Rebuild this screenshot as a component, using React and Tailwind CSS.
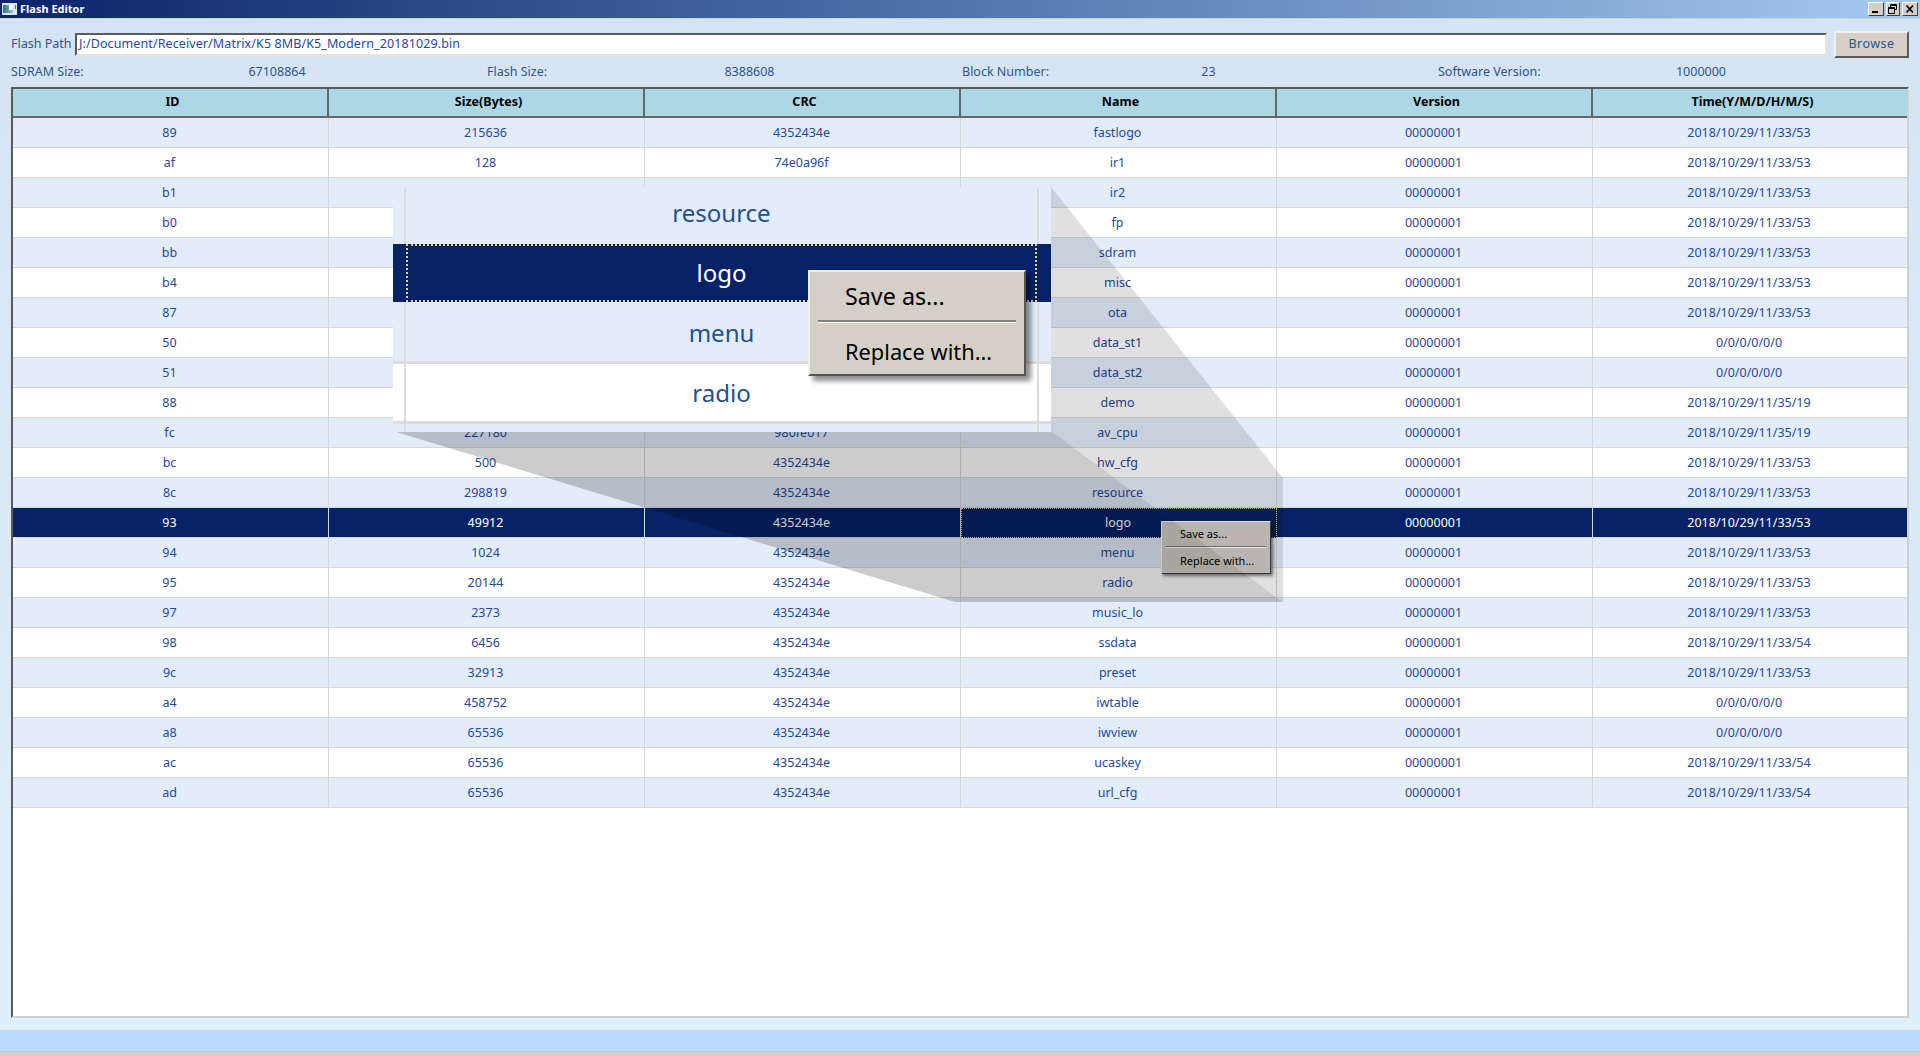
import React from 'react';

const T53 = '2018/10/29/11/33/53';
const T54 = '2018/10/29/11/33/54';
const T19 = '2018/10/29/11/35/19';
const T0 = '0/0/0/0/0/0';
const CRC = '4352434e';

const rows = [
    ['89', '215636', CRC, 'fastlogo', T53],
    ['af', '128', '74e0a96f', 'ir1', T53],
    ['b1', '', '', 'ir2', T53],
    ['b0', '', '', 'fp', T53],
    ['bb', '', '', 'sdram', T53],
    ['b4', '', '', 'misc', T53],
    ['87', '', '', 'ota', T53],
    ['50', '', '', 'data_st1', T0],
    ['51', '', '', 'data_st2', T0],
    ['88', '', '', 'demo', T19],
    ['fc', '227180', '980fe017', 'av_cpu', T19],
    ['bc', '500', CRC, 'hw_cfg', T53],
    ['8c', '298819', CRC, 'resource', T53],
    ['93', '49912', CRC, 'logo', T53],
    ['94', '1024', CRC, 'menu', T53],
    ['95', '20144', CRC, 'radio', T53],
    ['97', '2373', CRC, 'music_lo', T53],
    ['98', '6456', CRC, 'ssdata', T54],
    ['9c', '32913', CRC, 'preset', T53],
    ['a4', '458752', CRC, 'iwtable', T0],
    ['a8', '65536', CRC, 'iwview', T0],
    ['ac', '65536', CRC, 'ucaskey', T54],
    ['ad', '65536', CRC, 'url_cfg', T54],
];

const headers = ['ID', 'Size(Bytes)', 'CRC', 'Name', 'Version', 'Time(Y/M/D/H/M/S)'];

const info = [
    { label: 'SDRAM Size:', value: '67108864', cls: 'w-[476px]', valueCls: 'w-[312px]' },
    { label: 'Flash Size:', value: '8388608', cls: 'w-[475px]', valueCls: 'w-[305px]' },
    { label: 'Block Number:', value: '23', cls: 'w-[476px]', valueCls: 'w-[273px]' },
    { label: 'Software Version:', value: '1000000', cls: 'w-[470px]', valueCls: 'w-[306px]' },
];

const cols = 'grid grid-cols-[316px_316px_316px_316px_316px_1fr]';

const WinButton = ({ w, children }) => (
    <div className={`${w} h-[14px] bg-[#d4d0c8] border border-t-white border-l-white border-r-[#404040] border-b-[#404040] flex items-center justify-center`}>
        <svg width="12" height="10" viewBox="0 0 12 10">{children}</svg>
    </div>
);

const TitleBar = () => (
    <div className="h-[18px] flex items-center bg-gradient-to-r from-[#0a246a] to-[#a6caf0] pl-[2px] pr-[2px]">
        <svg width="15" height="12" viewBox="0 0 15 12" className="shrink-0">
            <defs>
                <linearGradient id="ico" x1="0" y1="0" x2="1" y2="0">
                    <stop offset="0" stopColor="#2f6f78" />
                    <stop offset="1" stopColor="#8fc7d8" />
                </linearGradient>
            </defs>
            <rect x="0" y="0" width="15" height="12" fill="#dfe6ea" />
            <rect x="1" y="2" width="10" height="8" fill="url(#ico)" />
            <rect x="7" y="2" width="4" height="5" fill="#f4f8fa" />
            <rect x="13" y="2" width="1" height="4" fill="#3d6fa8" />
        </svg>
        <span className="ml-[3px] mb-[2px] text-[11px] font-bold text-white leading-none">Flash Editor</span>
        <div className="ml-auto flex gap-[2px]">
            <WinButton w="w-4"><rect x="2" y="7" width="6" height="2" fill="#000" /></WinButton>
            <WinButton w="w-[14px]">
                <path d="M3.5 3V0.5h6v5H8M3.5 1.5h6M1.5 3.5h6v6h-6zM1.5 4.5h6" fill="none" stroke="#000" strokeWidth="1" />
            </WinButton>
            <WinButton w="w-4"><path d="M2.5 1.5l6.5 7M9 1.5l-6.5 7" stroke="#000" strokeWidth="1.7" /></WinButton>
        </div>
    </div>
);

const ContextMenu = ({ big }) => (
    <div
        className={
            big
                ? 'absolute left-[415px] top-[83px] w-[218px] h-[106px] bg-[#d4d0c8] border-2 border-t-[#f0eee8] border-l-[#f0eee8] border-r-[#57554f] border-b-[#57554f] shadow-[5px_5px_5px_rgba(0,0,0,0.45)] text-black'
                : 'absolute left-[1161px] top-[521px] w-[110px] h-[53px] bg-[#d4d0c8] border border-t-white border-l-white border-r-[#404040] border-b-[#404040] shadow-[2px_2px_3px_rgba(0,0,0,0.5)] text-black text-[11px]'
        }
    >
        <div className={big ? 'h-[48px] pl-[35px] flex items-center text-[23.3px]' : 'h-[24px] pl-[18px] flex items-center'}>Save as...</div>
        <div className={big ? 'mx-[8px] h-[3px] bg-[#808080] border-b border-white' : 'mx-[4px] h-[2px] bg-[#808080] border-b border-white'} />
        <div className={big ? 'h-[53px] pl-[35px] pt-[5px] flex items-center text-[21.8px]' : 'h-[25px] pl-[18px] pt-[1px] flex items-center'}>Replace with...</div>
    </div>
);

const InsetRow = ({ name, h, bg, selected, line, shift }) => (
    <div className={`grid grid-cols-[13px_1fr_14px] ${h} ${bg} ${line ? 'border-b-[3px] border-[#dcdcdc]' : ''}`}>
        <div className={selected ? '' : 'border-r-2 border-[#dcdcdc]'} />
        <div
            className={`flex items-center justify-center ${shift || ''} ${
                selected ? 'text-white border-2 border-dotted border-[#e0d090]' : 'text-[#23508f]'
            }`}
        >
            {name}
        </div>
        <div className={selected ? '' : 'border-l-2 border-[#dcdcdc]'} />
    </div>
);

// Magnified view of the Name column, sits over the table
const Inset = () => (
    <div className="absolute left-[393px] top-[187px] w-[658px] h-[245px] overflow-hidden bg-[#e3edfa] text-[24px]">
        <InsetRow name="resource" h="h-[57px]" bg="bg-[#e3edfa]" shift="pb-[6px]" />
        <InsetRow name="logo" h="h-[58px]" bg="bg-[#082267]" selected />
        <InsetRow name="menu" h="h-[62px]" bg="bg-[#e3edfa]" line shift="pt-[2px]" />
        <InsetRow name="radio" h="h-[60px]" bg="bg-white" line />
        <InsetRow name="" h="h-[8px]" bg="bg-[#e3edfa]" />
        <ContextMenu big />
    </div>
);

const Table = () => (
    <div className="h-[931px] w-[1898px] bg-white border-2 border-t-[#5a5a5a] border-l-[#5a5a5a] border-r-[#d0d0d0] border-b-[#d0d0d0]">
        <div className={`${cols} h-[29px] bg-[#acd7e5] border-b-2 border-[#666666] font-bold text-black`}>
            {headers.map((h) => (
                <div key={h} className="flex items-center justify-center pl-[5px] border-r-2 border-[#666666] last:border-r-0">
                    {h}
                </div>
            ))}
        </div>
        {rows.map((r, i) => {
            const selected = r[0] === '93';
            const bg = selected ? 'bg-[#082267] text-white' : i % 2 === 0 ? 'bg-[#e3edfa] text-[#1f4a9c]' : 'bg-white text-[#1f4a9c]';
            return (
                <div key={r[0]} className={`${cols} h-[30px] ${bg}`}>
                    {[r[0], r[1], r[2], r[3], '00000001', r[4]].map((c, j) => (
                        <div
                            key={j}
                            className={`flex items-center justify-center pr-[2px] pt-[1px] border-r border-b last:border-r-0 ${
                                selected && j === 3
                                    ? 'border border-dotted border-[#e0d090]'
                                    : selected
                                      ? 'border-[#d8d8d8]'
                                      : 'border-[#d6d6d6]'
                            }`}
                        >
                            {c}
                        </div>
                    ))}
                </div>
            );
        })}
    </div>
);

export default function App() {
    return (
        <div className="relative w-[1920px] h-[1056px] overflow-hidden bg-[#d4d0c8] text-[12.5px] font-['Noto_Sans',sans-serif]">
            <TitleBar />
            <div className="mt-[1px] h-[1011px] bg-gradient-to-b from-[#d6e3f3] to-[#dfeffb] pt-[12px]">
                <div className="flex items-center h-[27px] pl-[11px] text-[#2f5590]">
                    <span className="w-[64px]">Flash Path</span>
                    <div className="w-[1752px] h-[23px] bg-white border-2 border-t-[#5a5a5a] border-l-[#5a5a5a] border-r-[#e8e4da] border-b-[#e8e4da] pl-[2px] flex items-center text-[#1f4a9c] tracking-[0.1px]">
                        J:/Document/Receiver/Matrix/K5 8MB/K5_Modern_20181029.bin
                    </div>
                    <button className="ml-[7px] w-[75px] h-[27px] bg-[#d4d0c8] border-2 border-t-[#f2f0ea] border-l-[#f2f0ea] border-r-[#5a5a5a] border-b-[#5a5a5a] text-[#2f5590] tracking-[0.5px]">
                        Browse
                    </button>
                </div>
                <div className="flex items-center h-[29px] pb-[1px] pl-[11px] text-[#2f5590]">
                    {info.map((it) => (
                        <div key={it.label} className={`flex ${it.cls}`}>
                            <span className="w-[110px]">{it.label}</span>
                            <span className={`${it.valueCls} text-center`}>{it.value}</span>
                        </div>
                    ))}
                </div>
                <div className="pl-[11px]">
                    <Table />
                </div>
            </div>
            <div className="h-[22px] bg-[#bcd9fe] border-b border-[#c8c8c8]" />

            <ContextMenu />

            {/* Shaded faces joining the logo cell to its magnified view */}
            <svg className="absolute left-0 top-0 pointer-events-none" width="1920" height="1056" viewBox="0 0 1920 1056">
                <polygon points="1051,187 1283,478 1283,602 1051,431" fill="#000" fillOpacity="0.12" />
                <polygon points="393,431 1051,431 1283,602 955,602" fill="#000" fillOpacity="0.2" />
            </svg>

            <Inset />
        </div>
    );
}
